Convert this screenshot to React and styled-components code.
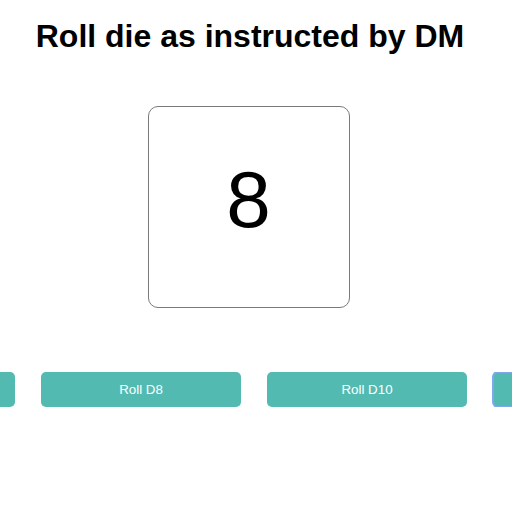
import React from "react";
import styled, { createGlobalStyle } from "styled-components";

const GlobalStyle = createGlobalStyle`
    body {
        margin: 0;
        background: #fff;
        font-family: "Liberation Sans", Arial, sans-serif;
        overflow: hidden;
    }
`

const Page = styled.div`
    display: flex;
    flex-direction: column;
    width: 512px;
`

const Title = styled.h1`
    margin: 18px 0 0;
    padding-right: 12px;
    font-size: 32px;
    font-weight: bold;
    text-align: center;
    color: #000;
`

const DieRow = styled.div`
    display: flex;
    justify-content: center;
    padding-right: 15px;
    margin-top: 51px;
`

const DieFace = styled.div`
    width: 200px;
    height: 186px;
    padding-bottom: 14px;
    border: 1px solid #7a7a7a;
    border-radius: 10px;
    display: flex;
    align-items: center;
    justify-content: center;
    font-size: 80px;
    line-height: 1;
    color: #000;
`

const ButtonRow = styled.div`
    display: flex;
    justify-content: center;
    gap: 26px;
    padding-right: 4px;
    margin-top: 64px;
    overflow: hidden;
`

const RollButton = styled.button`
    flex: 0 0 200px;
    height: 35px;
    border: none;
    border-radius: 5px;
    background: #53bab2;
    color: #fff;
    font-family: "Liberation Sans", Arial, sans-serif;
    font-size: 13.33px;
    cursor: pointer;
    outline: ${props => props.focused ? "2px solid #80a8ef" : "none"};
    outline-offset: -1px;
`

const dice = [4, 6, 8, 10, 12, 20]

const App = () => {
    return(
        <Page>
            <GlobalStyle/>
            <Title>Roll die as instructed by DM</Title>
            <DieRow>
                <DieFace>8</DieFace>
            </DieRow>
            <ButtonRow>
                {dice.map(d => (
                    <RollButton key={d} focused={d === 12}>Roll D{d}</RollButton>
                ))}
            </ButtonRow>
        </Page>
    )
}

export default App
